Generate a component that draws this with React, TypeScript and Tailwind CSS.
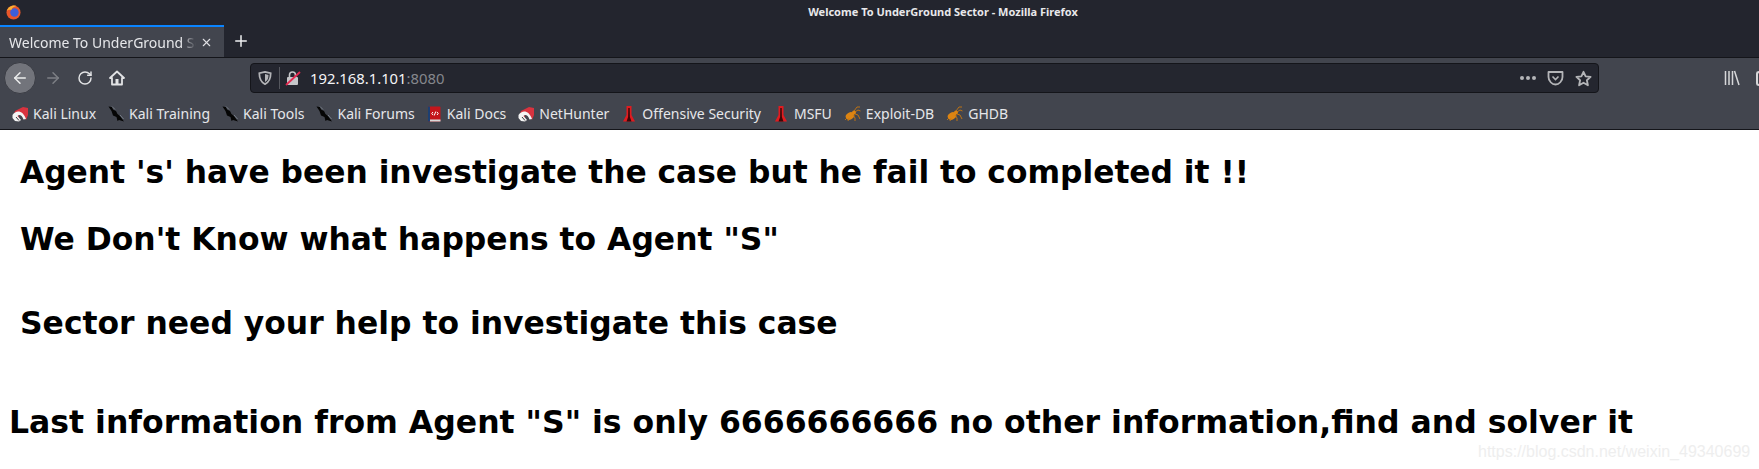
import React from 'react';
import { ArrowLeft, ArrowRight, RotateCw, Plus, X } from 'lucide-react';

const KaliLogo = () => (
  <svg width="16" height="16" viewBox="0 0 16 16" className="shrink-0">
    <path d="M3 5 L11 1 L16 2 L16 9 L14 14 L11 9 L6 8 L8 15 L4 15 L1 12 Z" fill="#d9333f" />
    <path d="M0.5 9 C4 3.5 11 4 14 13 L11.5 13.5 C10 9 7 8 5.5 10 L9 14 L7 15.5 L3 15 L0.5 12 Z" fill="#f4f4f4" />
    <path d="M4 11 L7 14.5" stroke="#3a3a3a" strokeWidth="1" />
  </svg>
);

const DragonLogo = () => (
  <svg width="16" height="16" viewBox="0 0 16 16" className="shrink-0">
    <path d="M0.5 0.5 L4 1 L5 3.5 L8 5 L9.5 8 L12 10 L16 15.5 L11 14 L9.5 15 L8.5 11 L5 9.5 L3.5 5 Z" fill="#050505" />
    <path d="M4 0.5 L7 3.5 M12 9 L15.5 13" stroke="#8f9aa3" strokeWidth="0.7" />
  </svg>
);

const DocsLogo = () => (
  <svg width="15" height="16" viewBox="0 0 15 16" className="shrink-0">
    <rect x="1" y="0.5" width="12.5" height="15" rx="1" fill="#c4161c" />
    <rect x="1" y="0.5" width="2" height="15" fill="#1d3f72" />
    <rect x="3" y="13.5" width="10.5" height="2" fill="#d9d9d9" />
    <path d="M6 6 L4.8 7.5 L6 9 M10 6 L11.2 7.5 L10 9 M8.8 5.5 L7.2 9.5" stroke="#fff" strokeWidth="1" fill="none" />
  </svg>
);

const OffsecLogo = () => (
  <svg width="16" height="18" viewBox="0 0 16 18" className="shrink-0">
    <path d="M5.5 1 L10.5 1 L10.5 10 L14 16.5 L2 16.5 L5.5 10 Z" fill="#e01b1f" />
    <path d="M7.3 3 L8.7 3 L8.9 12 L10.5 16.5 L5.5 16.5 L7.1 12 Z" fill="#3a0808" />
  </svg>
);

const SpiderLogo = () => (
  <svg width="17" height="16" viewBox="0 0 17 16" className="shrink-0">
    <ellipse cx="6" cy="10" rx="4.5" ry="3.5" fill="#dd8412" transform="rotate(-30 6 10)" />
    <circle cx="10" cy="6.5" r="2" fill="#dd8412" />
    <path d="M10 5 L13 1 L16 1 M11 6 L14 4 L16.5 5 M11 8 L14 9 L16 13 M9 9 L11 12 L11 15 M5 12 L4 15 M3 12 L1 14" stroke="#c9770f" strokeWidth="0.9" fill="none" />
  </svg>
);

const bookmarks = [
  { label: 'Kali Linux', icon: <KaliLogo /> },
  { label: 'Kali Training', icon: <DragonLogo /> },
  { label: 'Kali Tools', icon: <DragonLogo /> },
  { label: 'Kali Forums', icon: <DragonLogo /> },
  { label: 'Kali Docs', icon: <DocsLogo /> },
  { label: 'NetHunter', icon: <KaliLogo /> },
  { label: 'Offensive Security', icon: <OffsecLogo /> },
  { label: 'MSFU', icon: <OffsecLogo /> },
  { label: 'Exploit-DB', icon: <SpiderLogo /> },
  { label: 'GHDB', icon: <SpiderLogo /> },
];

export default function App() {
  return (
    <div className="w-[1759px] h-[469px] overflow-hidden bg-white font-['Liberation_Sans',sans-serif]">
      {/* title bar + tabs */}
      <div className="h-[58px] bg-[#23252e] relative border-b border-[#14151a]">
        <div className="h-[25px] flex items-center pl-[6px] relative">
          <svg width="15" height="15" viewBox="0 0 16 16">
            <circle cx="8" cy="8" r="7.5" fill="#e8562a" />
            <circle cx="9" cy="8" r="4.5" fill="#3c5ed8" />
            <path d="M1 6 C3 1 8 0 11 1 C8 2 6 3 6 5 C4 5 2 5 1 6 Z" fill="#f9b233" />
          </svg>
          <div className="flex-1 text-center pl-[106px] text-[11px] font-bold text-[#e8e8ea] font-['Noto_Sans',sans-serif]">
            Welcome To UnderGround Sector - Mozilla Firefox
          </div>
        </div>
        <div className="flex h-[32px] items-stretch">
          <div className="w-[224px] bg-[#42454e] border-t-2 border-[#0a84ff] flex items-center pl-[9px] pr-[11px]">
            <span className="text-[14px] text-[#e6e7ea] whitespace-nowrap overflow-hidden w-[187px] font-['Noto_Sans',sans-serif] [mask-image:linear-gradient(to_right,black_92%,transparent)]">
              Welcome To UnderGround Sector
            </span>
            <X size={13} strokeWidth={2} className="ml-auto text-[#e0e0e4]" />
          </div>
          <div className="w-[34px] flex items-center justify-center">
            <Plus size={18} strokeWidth={2} className="text-[#f0f0f2]" />
          </div>
        </div>
      </div>

      {/* nav bar */}
      <div className="h-[40px] bg-[#42454e] flex items-center">
        <div className="w-[32px] h-[32px] shrink-0 rounded-full bg-[#72747b] ml-[4px] flex items-center justify-center border border-[#3a3c44]">
          <ArrowLeft size={18} strokeWidth={2} className="text-[#eceded]" />
        </div>
        <ArrowRight size={18} strokeWidth={2} className="shrink-0 text-[#7d7f85] ml-[8px]" />
        <RotateCw size={16} strokeWidth={2.2} className="shrink-0 text-[#e2e3e5] ml-[15px]" />
        <svg width="16" height="16" viewBox="0 0 16 16" className="ml-[16px] shrink-0">
          <path d="M8 1.5 L15 8 H13 V14.5 H3 V8 H1 Z" fill="none" stroke="#e2e3e5" strokeWidth="1.8" strokeLinejoin="round" />
          <rect x="6.5" y="9" width="3" height="5.5" fill="#e2e3e5" />
        </svg>
        <div className="ml-[125px] w-[1349px] shrink-0 h-[30px] rounded-[4px] bg-[#24262f] border border-[#14151a] flex items-center">
          <svg width="14" height="14" viewBox="0 0 16 16" className="ml-[7px]">
            <path d="M8 1 L14.5 2.5 C14.5 9 13 12.5 8 15 C3 12.5 1.5 9 1.5 2.5 Z" fill="none" stroke="#b4b5b8" strokeWidth="2" />
            <path d="M8 3.5 L12 4.5 C12 8.5 11 10.5 8 12.5 Z" fill="#b4b5b8" />
          </svg>
          <div className="w-px h-[22px] bg-[#55575e] ml-[7px]" />
          <svg width="16" height="16" viewBox="0 0 16 16" className="ml-[5px]">
            <rect x="2" y="7" width="11" height="8" rx="1" fill="#c5c6c9" />
            <path d="M4.5 7 V5 a3 3 0 0 1 6 0 V7" fill="none" stroke="#c5c6c9" strokeWidth="1.6" />
            <path d="M1 15 L15 2" stroke="#e22850" strokeWidth="1.8" />
          </svg>
          <span className="ml-[9px] text-[14.8px] text-[#f4f4f6] font-['Noto_Sans',sans-serif]">
            192.168.1.101<span className="text-[#85878d]">:8080</span>
          </span>
          <div className="ml-auto flex items-center">
            <div className="flex gap-[2px]">
              <span className="w-[4px] h-[4px] rounded-full bg-[#b4b5b8]" />
              <span className="w-[4px] h-[4px] rounded-full bg-[#b4b5b8]" />
              <span className="w-[4px] h-[4px] rounded-full bg-[#b4b5b8]" />
            </div>
            <svg width="17" height="16" viewBox="0 0 17 16" className="ml-[11px]">
              <path d="M1.5 2 H15.5 V7 C15.5 11 12 14.5 8.5 14.5 C5 14.5 1.5 11 1.5 7 Z" fill="none" stroke="#b4b5b8" strokeWidth="1.8" strokeLinejoin="round" />
              <path d="M5.5 6.5 L8.5 9.5 L11.5 6.5" fill="none" stroke="#b4b5b8" strokeWidth="1.6" />
            </svg>
            <svg width="17" height="17" viewBox="0 0 24 24" className="ml-[11px] mr-[6px]">
              <path d="M12 2.5 L15 9 L22 9.8 L16.8 14.5 L18.2 21.5 L12 18 L5.8 21.5 L7.2 14.5 L2 9.8 L9 9 Z" fill="none" stroke="#b4b5b8" strokeWidth="2.6" strokeLinejoin="round" />
            </svg>
          </div>
        </div>
        <svg width="16" height="16" viewBox="0 0 16 16" className="ml-[125px] shrink-0">
          <path d="M1.5 1 V15 M5 1 V15 M8.5 1 V15 M10.5 1 L15 15" stroke="#d6d7d9" strokeWidth="1.5" fill="none" />
        </svg>
        <div className="ml-[16px] w-[10px] h-[15px] shrink-0 rounded-l-[3px] border-2 border-r-0 border-[#d6d7d9]" />
      </div>

      {/* bookmarks */}
      <div className="h-[32px] bg-[#42454e] border-b border-[#14151a] flex items-center pl-[12px] gap-[12px]">
        {bookmarks.map((b) => (
          <div key={b.label} className="flex items-center gap-[5px]">
            {b.icon}
            <span className="text-[14px] text-[#e6e7ea] whitespace-nowrap font-['Noto_Sans',sans-serif]">{b.label}</span>
          </div>
        ))}
      </div>

      {/* page */}
      <div className="relative font-['DejaVu_Sans',sans-serif] font-bold text-[31.4px] leading-[38px] text-black">
        <h2 className="pl-[20px] pt-[23px] text-[31.3px]">Agent 's' have been investigate the case but he fail to completed it !!</h2>
        <h2 className="pl-[20px] pt-[29px]">We Don't Know what happens to Agent "S"</h2>
        <h2 className="pl-[20px] pt-[46px]">Sector need your help to investigate this case</h2>
        <h2 className="pl-[9px] pt-[61px] text-[31.5px]">Last information from Agent "S" is only 6666666666 no other information,find and solver it</h2>
        <div className="absolute left-[1478px] top-[313px] text-[16px] leading-[18px] font-normal text-[#eeeeee] font-['Liberation_Sans',sans-serif]">
          https://blog.csdn.net/weixin_49340699
        </div>
      </div>
    </div>
  );
}
